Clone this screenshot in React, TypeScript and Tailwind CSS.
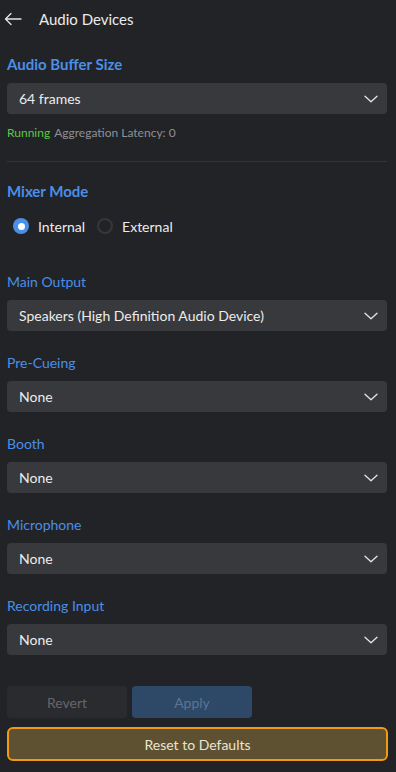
import React, { useState } from 'react';

const FONT = { fontFamily: 'Lato, "Open Sans", sans-serif' };

const Chevron: React.FC = () => (
  <svg width="14" height="8" viewBox="0 0 14 8" fill="none" className="shrink-0">
    <path d="M1 1.2l6 5.6 6-5.6" stroke="#e6e6e6" strokeWidth="1.3" strokeLinecap="round" strokeLinejoin="round" />
  </svg>
);

const Select: React.FC<{ value: string }> = ({ value }) => (
  <div className="h-[31px] rounded-[4px] bg-[#38393c] flex items-center justify-between pl-[12px] pr-[9px]">
    <span className="text-[14px] text-[#ececec] leading-none">{value}</span>
    <Chevron />
  </div>
);

const Radio: React.FC<{ checked: boolean; label: string; onClick: () => void }> = ({ checked, label, onClick }) => (
  <button onClick={onClick} className="flex items-center h-[20px]">
    {checked ? (
      <span className="w-[16px] h-[16px] rounded-full bg-[#4a8fe8] flex items-center justify-center">
        <span className="w-[7px] h-[7px] rounded-full bg-white" />
      </span>
    ) : (
      <span className="w-[16px] h-[16px] rounded-full border-2 border-[#36373a]" />
    )}
    <span className="ml-[9px] text-[14px] text-[#ececec]">{label}</span>
  </button>
);

const devices = [
  { label: 'Main Output', value: 'Speakers (High Definition Audio Device)' },
  { label: 'Pre-Cueing', value: 'None' },
  { label: 'Booth', value: 'None' },
  { label: 'Microphone', value: 'None' },
  { label: 'Recording Input', value: 'None' },
];

const App: React.FC = () => {
  const [mode, setMode] = useState<'internal' | 'external'>('internal');

  return (
    <div className="w-[396px] h-[772px] bg-[#222326] overflow-hidden flex flex-col" style={FONT}>
      {/* Header */}
      <div className="h-[38px] shrink-0 flex items-center">
        <svg width="18" height="14" viewBox="0 0 18 14" fill="none" className="ml-[4px]">
          <path d="M17 7H1.5M7 1.5L1.5 7 7 12.5" stroke="#e6e6e6" strokeWidth="1.3" strokeLinecap="round" strokeLinejoin="round" />
        </svg>
        <span className="ml-[17px] text-[15px] text-[#ececec]">Audio Devices</span>
      </div>

      <div className="pl-[7px] pr-[9px] flex flex-col">
        <div className="mt-[16px] h-[20px] flex items-center text-[15px] font-bold text-[#4a8fe8]">Audio Buffer Size</div>
        <div className="mt-[9px]">
          <Select value="64 frames" />
        </div>
        <div className="mt-[11px] h-[16px] flex items-center text-[12px]">
          <span className="text-[#5cc745]">Running</span>
          <span className="ml-[4px] text-[#8f9094]">Aggregation Latency: 0</span>
        </div>

        <div className="mt-[20px] h-px bg-[#333437]" />

        <div className="mt-[19px] h-[20px] flex items-center text-[15px] font-bold text-[#4a8fe8]">Mixer Mode</div>
        <div className="mt-[15px] flex items-center gap-[12px] pl-[6px]">
          <Radio checked={mode === 'internal'} label="Internal" onClick={() => setMode('internal')} />
          <Radio checked={mode === 'external'} label="External" onClick={() => setMode('external')} />
        </div>

        <div className="mt-[14px] flex flex-col">
          {devices.map((d) => (
            <div key={d.label} className="mt-[21px] flex flex-col">
              <div className="h-[20px] flex items-center text-[14px] text-[#4a8fe8]">{d.label}</div>
              <div className="mt-[9px]">
                <Select value={d.value} />
              </div>
            </div>
          ))}
        </div>

        {/* Actions */}
        <div className="mt-[31px] flex gap-[5px]">
          <button className="w-[120px] h-[32px] rounded-[4px] bg-[#2a2b2f] text-[14px] text-[#65666a]">Revert</button>
          <button className="w-[120px] h-[32px] rounded-[4px] bg-[#2e4867] text-[14px] text-[#5a7596]">Apply</button>
        </div>
        <button className="mt-[9px] w-[381px] h-[34px] rounded-[6px] border-2 border-[#f39a12] bg-[#5e5132] text-[14px] text-[#ece4d0]">
          Reset to Defaults
        </button>
      </div>
    </div>
  );
};

export default App;
